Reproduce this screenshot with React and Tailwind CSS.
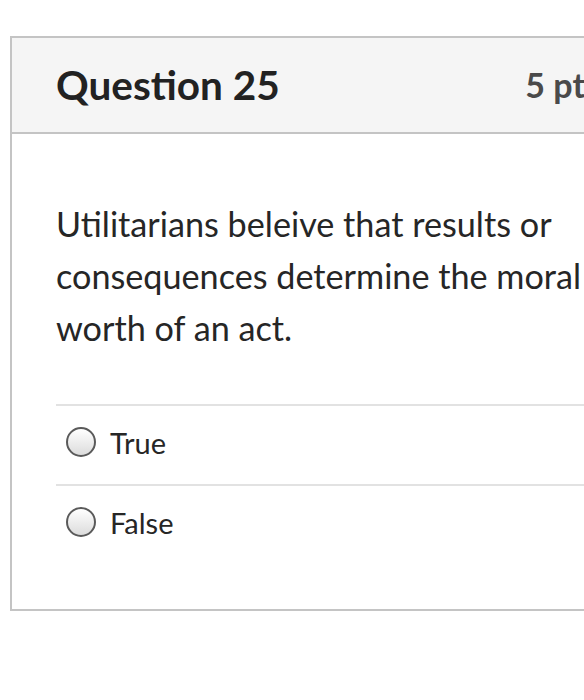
import React from 'react';

function Radio() {
  return (
    <span className="w-[30px] h-[30px] shrink-0 rounded-full border-2 border-[#5a5a5a] bg-linear-to-b from-white to-[#dcdcdc]" />
  );
}

function Answer({ label }) {
  return (
    <div className="flex items-center h-[80px] border-t-2 border-[#e2e2e2] pl-[10px] pb-[6px] gap-[14px]">
      <Radio />
      <span className="text-[29px] text-[#262626] leading-none">{label}</span>
    </div>
  );
}

export default function App() {
  return (
    <div className="w-[584px] h-[700px] overflow-hidden bg-white font-['Lato',sans-serif]">
      <div className="ml-[10px] mt-[36px] w-[660px] border-2 border-[#c4c4c4]">
        <div className="flex items-center justify-between h-[96px] bg-[#f5f5f5] border-b-2 border-[#c4c4c4] pl-[44px] pr-[68px]">
          <h2 className="text-[40.5px] font-bold text-[#222222] leading-none">Question 25</h2>
          <span className="text-[34px] font-bold text-[#4a4a4a] leading-none">5 pts</span>
        </div>
        <div className="pl-[44px] pt-[64px] pb-[45px]">
          <p className="text-[34.2px] leading-[52px] text-[#262626] w-[560px]">
            Utilitarians beleive that results or consequences determine the moral worth of an act.
          </p>
          <div className="mt-[50px]">
            <Answer label="True" />
            <Answer label="False" />
          </div>
        </div>
      </div>
    </div>
  );
}
